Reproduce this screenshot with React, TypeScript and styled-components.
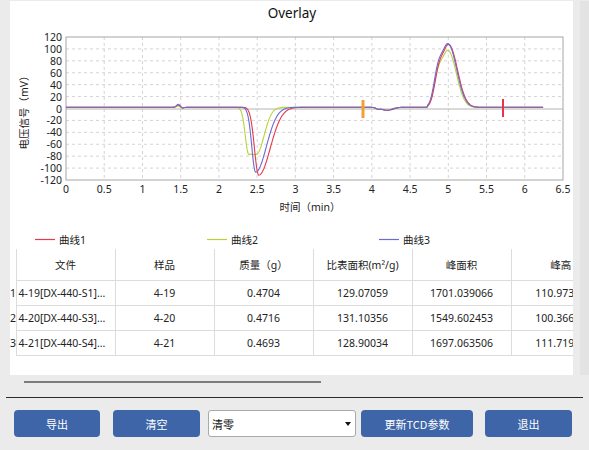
import React from "react";
import styled, { createGlobalStyle } from "styled-components";

const GlobalStyle = createGlobalStyle`
  html, body { margin: 0; padding: 0; }
  body {
    background: #ebebeb;
    font-family: "Noto Sans", "Noto Sans CJK SC", sans-serif;
    color: #222;
  }
`;

/* ---------- chart geometry (page coordinates) ---------- */
const PX0 = 66;
const PX1 = 563;
const PY0 = 37;
const PY1 = 180;
const T_MAX = 6.5;
const V_MAX = 120;

const xOf = (t: number) => PX0 + (t / T_MAX) * (PX1 - PX0);
const yOf = (v: number) => (PY0 + PY1) / 2 - (v / V_MAX) * ((PY1 - PY0) / 2);

const gauss = (t: number, c: number, s: number) => Math.exp(-0.5 * ((t - c) / s) ** 2);
const asym = (t: number, c1: number, c2: number, sl: number, sr: number) => {
  if (t < c1) return gauss(t, c1, sl);
  if (t > c2) return gauss(t, c2, sr);
  return 1;
};

type CurveSpec = {
  color: string;
  bump: number;
  neg: [number, number, number, number, number];
  pos: [number, number, number, number, number];
};

// neg: depth, flat start, flat end, left sigma, right sigma
// pos: height, centre, shoulder height, left sigma, right sigma
const curves: CurveSpec[] = [
  { color: "#b8d33a", bump: 2, neg: [-79, 2.39, 2.49, 0.045, 0.1], pos: [94, 5.0, 40, 0.085, 0.105] },
  { color: "#e8384c", bump: 4, neg: [-114, 2.52, 2.52, 0.055, 0.15], pos: [104, 5.01, 44, 0.085, 0.11] },
  { color: "#6b6bd2", bump: 5, neg: [-109, 2.48, 2.48, 0.05, 0.14], pos: [105, 5.0, 46, 0.085, 0.11] },
];

const valueAt = (t: number, c: CurveSpec) => {
  const [depth, n1, n2, nsl, nsr] = c.neg;
  const [h, pc, sh, psl, psr] = c.pos;
  let v = 2;
  v += c.bump * gauss(t, 1.47, 0.025) - 1.5 * gauss(t, 1.52, 0.02);
  v += depth * asym(t, n1, n2, nsl, nsr);
  v += -5 * gauss(t, 4.2, 0.07) - 2 * gauss(t, 4.08, 0.03);
  if (t > 4.72) {
    v += h * asym(t, pc, pc, psl, psr) + sh * gauss(t, pc - 0.14, 0.055);
  }
  return v;
};

const pathFor = (c: CurveSpec) => {
  const pts: string[] = [];
  for (let i = 0; i <= 624; i++) {
    const t = i / 100;
    pts.push(`${xOf(t).toFixed(2)},${yOf(valueAt(t, c)).toFixed(2)}`);
  }
  return "M" + pts.join("L");
};

const xTicks = Array.from({ length: 14 }, (_, i) => i * 0.5);
const yTicks = Array.from({ length: 13 }, (_, i) => 120 - i * 20);

/* ---------- layout ---------- */
const Page = styled.div`
  width: 589px;
  height: 450px;
  display: flex;
  flex-direction: column;
`;

const TopArea = styled.div`
  display: flex;
  padding-top: 1px;
`;

const Panel = styled.div`
  margin-left: 10px;
  width: 563px;
  height: 374px;
  background: #ffffff;
  display: flex;
  flex-direction: column;
  overflow: hidden;
`;

const SideTrack = styled.div`
  margin-left: 7px;
  width: 9px;
  height: 374px;
  background: #e3e3e3;
`;

const ChartSvg = styled.svg`
  display: block;
  flex: none;
  font-family: "Noto Sans", "Noto Sans CJK SC", sans-serif;
`;

const Legend = styled.div`
  display: flex;
  align-items: center;
  height: 19px;
  padding-left: 25px;
  font-size: 10.5px;
  color: #222;
`;

const LegendItem = styled.div`
  width: 172px;
  display: flex;
  align-items: center;
  gap: 4px;
`;

const SwatchSvg = styled.svg`
  display: block;
  flex: none;
`;

const LegendSwatch = ({ color }: { color: string }) => (
  <SwatchSvg width={20} height={3} viewBox="0 0 20 3">
    <line x1={0} x2={20} y1={1.5} y2={1.5} stroke={color} strokeWidth={1.2} />
  </SwatchSvg>
);

const TableWrap = styled.div`
  width: 563px;
  overflow: hidden;
`;

const Table = styled.table`
  border-collapse: collapse;
  table-layout: fixed;
  width: 600px;
  font-size: 10.5px;
  color: #222;
`;

const HeadCell = styled.th`
  height: 31px;
  padding: 0;
  font-weight: normal;
  text-align: center;
  border-left: 1px solid #dcdcdc;
  border-bottom: 1px solid #dcdcdc;
  white-space: nowrap;
  overflow: hidden;
`;

const Cell = styled.td<{ $left?: boolean }>`
  height: 24px;
  padding: 0 0 0 ${(p) => (p.$left ? "2px" : "0")};
  text-align: ${(p) => (p.$left ? "left" : "center")};
  border-left: 1px solid #dcdcdc;
  border-bottom: 1px solid #dcdcdc;
  white-space: nowrap;
  overflow: hidden;
`;

const IndexCell = styled.td`
  padding: 0;
  text-align: left;
  white-space: nowrap;
  overflow: visible;
`;

const ScrollThumb = styled.div`
  margin: 6px 0 0 24px;
  width: 297px;
  height: 2px;
  background: #7d7d7d;
`;

const Divider = styled.div`
  margin: 14px 0 0 6px;
  width: 577px;
  height: 1px;
  background: #2b2b2b;
`;

const ButtonRow = styled.div`
  display: flex;
  margin-top: 12px;
  padding-left: 14px;
  height: 27px;
`;

const ActionButton = styled.button<{ $w: number; $gap: number }>`
  width: ${(p) => p.$w}px;
  margin-left: ${(p) => p.$gap}px;
  height: 27px;
  border: none;
  border-radius: 4px;
  background: #3e65a8;
  color: #ffffff;
  font-family: "Noto Sans CJK SC", "Noto Sans", sans-serif;
  font-size: 11px;
  padding: 0;
`;

const Select = styled.div<{ $gap: number }>`
  width: 148px;
  margin-left: ${(p) => p.$gap}px;
  height: 27px;
  box-sizing: border-box;
  border: 1px solid #a9a9a9;
  border-radius: 3px;
  background: #ffffff;
  display: flex;
  align-items: center;
  justify-content: space-between;
  padding: 0 4px 0 3px;
  font-family: "Noto Sans CJK SC", "Noto Sans", sans-serif;
  font-size: 11px;
  color: #111;
`;

const Caret = styled.span`
  width: 0;
  height: 0;
  border-left: 3px solid transparent;
  border-right: 3px solid transparent;
  border-top: 4px solid #111;
`;

const columns = ["文件", "样品", "质量（g）", "比表面积(m²/g)", "峰面积", "峰高"];
const rows = [
  ["1", "4-19[DX-440-S1]...", "4-19", "0.4704", "129.07059", "1701.039066", "110.97372"],
  ["2", "4-20[DX-440-S3]...", "4-20", "0.4716", "131.10356", "1549.602453", "100.36672"],
  ["3", "4-21[DX-440-S4]...", "4-21", "0.4693", "128.90034", "1697.063506", "111.71960"],
];

const legendItems = [
  ["#e8384c", "曲线1"],
  ["#b8d33a", "曲线2"],
  ["#6b6bd2", "曲线3"],
];

const OverlayChart = () => (
  <ChartSvg width={563} height={229} viewBox="10 1 563 229">
    <text x={292} y={18} fontSize={13.5} fill="#111" textAnchor="middle">
      Overlay
    </text>
    {xTicks.slice(1, 13).map((t) => (
      <line key={"gx" + t} x1={xOf(t)} x2={xOf(t)} y1={PY0} y2={PY1} stroke="#d4d4d4" strokeDasharray="3 3" />
    ))}
    {yTicks.slice(1, 12).map((v) =>
      v === 0 ? null : (
        <line key={"gy" + v} x1={PX0} x2={PX1} y1={yOf(v)} y2={yOf(v)} stroke="#d4d4d4" strokeDasharray="3 3" />
      )
    )}
    <line x1={PX0} x2={PX1} y1={yOf(0) + 0.5} y2={yOf(0) + 0.5} stroke="#b4b4b4" />
    <rect x={PX0} y={PY0} width={PX1 - PX0} height={PY1 - PY0} fill="none" stroke="#a6a6a6" />
    {curves.map((c) => (
      <path key={c.color} d={pathFor(c)} fill="none" stroke={c.color} strokeWidth={1.1} />
    ))}
    <rect x={361.5} y={100} width={3} height={18} fill="#f0a035" />
    <rect x={502} y={99} width={2} height={18} fill="#e8334a" />
    {yTicks.map((v) => (
      <text key={"ly" + v} x={62} y={yOf(v) + 4} fontSize={10.5} fill="#222" textAnchor="end">
        {v}
      </text>
    ))}
    {xTicks.map((t) => (
      <text key={"lx" + t} x={xOf(t)} y={193} fontSize={10.5} fill="#222" textAnchor="middle">
        {t}
      </text>
    ))}
    <text x={310} y={211} fontSize={10.5} fill="#222" textAnchor="middle">
      时间（min）
    </text>
    <text x={28} y={110} fontSize={10.5} fill="#222" textAnchor="middle" transform="rotate(-90 28 110)">
      电压信号（mV）
    </text>
  </ChartSvg>
);

export default function App() {
  return (
    <>
      <GlobalStyle />
      <Page>
        <TopArea>
          <Panel>
            <OverlayChart />
            <Legend>
              {legendItems.map(([c, label]) => (
                <LegendItem key={label}>
                  <LegendSwatch color={c} />
                  {label}
                </LegendItem>
              ))}
            </Legend>
            <TableWrap>
              <Table>
                <colgroup>
                  <col style={{ width: 6 }} />
                  {columns.map((c) => (
                    <col key={c} style={{ width: 99 }} />
                  ))}
                </colgroup>
                <thead>
                  <tr>
                    <th />
                    {columns.map((c) => (
                      <HeadCell key={c}>{c}</HeadCell>
                    ))}
                  </tr>
                </thead>
                <tbody>
                  {rows.map((r) => (
                    <tr key={r[0]}>
                      <IndexCell>{r[0]}</IndexCell>
                      <Cell $left>{r[1]}</Cell>
                      {r.slice(2).map((v, i) => (
                        <Cell key={i}>{v}</Cell>
                      ))}
                    </tr>
                  ))}
                </tbody>
              </Table>
            </TableWrap>
          </Panel>
          <SideTrack />
        </TopArea>
        <ScrollThumb />
        <Divider />
        <ButtonRow>
          <ActionButton $w={86} $gap={0}>导出</ActionButton>
          <ActionButton $w={87} $gap={13}>清空</ActionButton>
          <Select $gap={8}>
            清零
            <Caret />
          </Select>
          <ActionButton $w={112} $gap={5}>更新TCD参数</ActionButton>
          <ActionButton $w={87} $gap={12}>退出</ActionButton>
        </ButtonRow>
      </Page>
    </>
  );
}
